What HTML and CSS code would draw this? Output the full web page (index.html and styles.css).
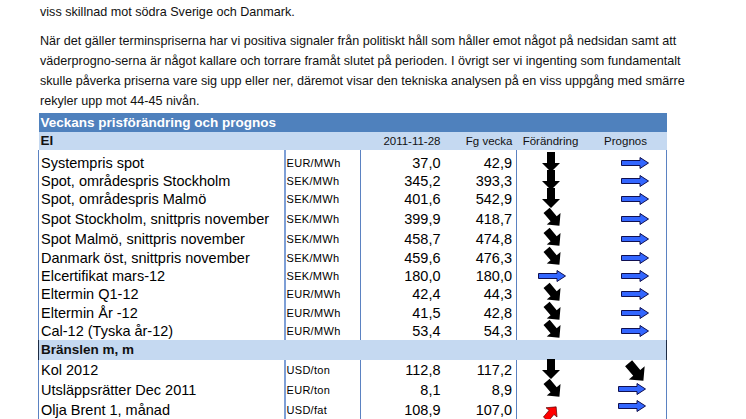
FILE: index.html
```html
<!DOCTYPE html>
<html lang="sv">
<head>
<meta charset="utf-8">
<link rel="stylesheet" href="styles.css">
</head>
<body>
<div class="text">
  <p class="p1">viss skillnad mot södra Sverige och Danmark.</p>
  <p class="p2">När det gäller terminspriserna har vi positiva signaler från politiskt håll som håller emot något på nedsidan samt att<br>väderprogno-serna är något kallare och torrare framåt slutet på perioden. I övrigt ser vi ingenting som fundamentalt<br>skulle påverka priserna vare sig upp eller ner, däremot visar den tekniska analysen på en viss uppgång med smärre<br>rekyler upp mot 44-45 nivån.</p>
</div>

<svg width="0" height="0" class="defs">
  <defs>
    <path id="down" d="M5 0 H13 V11 H18 L9 20 L0 11 H5 Z"/>
    <path id="right" d="M0.5 3.5 H19 V0.5 L27.5 6 L19 11.5 V8.5 H0.5 Z"/>
  </defs>
</svg>

<table class="prices">
  <colgroup>
    <col class="c-name"><col class="c-unit"><col class="c-num"><col class="c-num2"><col class="c-chg"><col class="c-prog">
  </colgroup>
  <tr class="title"><td colspan="6">Veckans prisförändring och prognos</td></tr>
  <tr class="sub">
    <td class="name">El</td><td></td><td class="num">2011-11-28</td><td class="num">Fg vecka</td><td class="ctr">Förändring</td><td class="ctr prg">Prognos</td>
  </tr>
  <tr class="r h22">
    <td class="name">Systempris spot</td><td class="unit">EUR/MWh</td><td class="num">37,0</td><td class="num sep">42,9</td>
    <td class="arr"><svg class="a-down" width="18" height="20"><use href="#down"/></svg></td>
    <td class="arr edge"><svg class="a-right" width="28" height="12"><use href="#right"/></svg></td>
  </tr>
  <tr class="r h18">
    <td class="name">Spot, områdespris Stockholm</td><td class="unit">SEK/MWh</td><td class="num">345,2</td><td class="num sep">393,3</td>
    <td class="arr"><svg class="a-down" width="18" height="20"><use href="#down"/></svg></td>
    <td class="arr edge"><svg class="a-right" width="28" height="12"><use href="#right"/></svg></td>
  </tr>
  <tr class="r h18">
    <td class="name">Spot, områdespris Malmö</td><td class="unit">SEK/MWh</td><td class="num">401,6</td><td class="num sep">542,9</td>
    <td class="arr"><svg class="a-down" width="18" height="20"><use href="#down"/></svg></td>
    <td class="arr edge"><svg class="a-right" width="28" height="12"><use href="#right"/></svg></td>
  </tr>
  <tr class="r h20">
    <td class="name">Spot Stockholm, snittpris november</td><td class="unit">SEK/MWh</td><td class="num">399,9</td><td class="num sep">418,7</td>
    <td class="arr"><svg class="a-diag" width="18" height="20"><use href="#down"/></svg></td>
    <td class="arr edge"><svg class="a-right" width="28" height="12"><use href="#right"/></svg></td>
  </tr>
  <tr class="r h20">
    <td class="name">Spot Malmö, snittpris november</td><td class="unit">SEK/MWh</td><td class="num">458,7</td><td class="num sep">474,8</td>
    <td class="arr"><svg class="a-diag" width="18" height="20"><use href="#down"/></svg></td>
    <td class="arr edge"><svg class="a-right" width="28" height="12"><use href="#right"/></svg></td>
  </tr>
  <tr class="r h19">
    <td class="name">Danmark öst, snittpris november</td><td class="unit">SEK/MWh</td><td class="num">459,6</td><td class="num sep">476,3</td>
    <td class="arr"><svg class="a-diag" width="18" height="20"><use href="#down"/></svg></td>
    <td class="arr edge"><svg class="a-right" width="28" height="12"><use href="#right"/></svg></td>
  </tr>
  <tr class="r h18">
    <td class="name">Elcertifikat mars-12</td><td class="unit">SEK/MWh</td><td class="num">180,0</td><td class="num sep">180,0</td>
    <td class="arr"><svg class="a-right a-chg" width="28" height="12"><use href="#right"/></svg></td>
    <td class="arr edge"><svg class="a-right" width="28" height="12"><use href="#right"/></svg></td>
  </tr>
  <tr class="r h18">
    <td class="name">Eltermin Q1-12</td><td class="unit">EUR/MWh</td><td class="num">42,4</td><td class="num sep">44,3</td>
    <td class="arr"><svg class="a-diag" width="18" height="20"><use href="#down"/></svg></td>
    <td class="arr edge"><svg class="a-right" width="28" height="12"><use href="#right"/></svg></td>
  </tr>
  <tr class="r h19">
    <td class="name">Eltermin År -12</td><td class="unit">EUR/MWh</td><td class="num">41,5</td><td class="num sep">42,8</td>
    <td class="arr"><svg class="a-diag" width="18" height="20"><use href="#down"/></svg></td>
    <td class="arr edge"><svg class="a-right" width="28" height="12"><use href="#right"/></svg></td>
  </tr>
  <tr class="r h18">
    <td class="name">Cal-12 (Tyska år-12)</td><td class="unit">EUR/MWh</td><td class="num">53,4</td><td class="num sep">54,3</td>
    <td class="arr"><svg class="a-diag" width="18" height="20"><use href="#down"/></svg></td>
    <td class="arr edge"><svg class="a-right" width="28" height="12"><use href="#right"/></svg></td>
  </tr>
  <tr class="sub sec">
    <td class="name" colspan="6">Bränslen m, m</td>
  </tr>
  <tr class="r h19">
    <td class="name">Kol 2012</td><td class="unit">USD/ton</td><td class="num">112,8</td><td class="num sep">117,2</td>
    <td class="arr"><svg class="a-down" width="18" height="20"><use href="#down"/></svg></td>
    <td class="arr edge"><svg class="a-diag a-prog" width="18" height="20"><use href="#down"/></svg></td>
  </tr>
  <tr class="r h20">
    <td class="name">Utsläppsrätter Dec 2011</td><td class="unit">EUR/ton</td><td class="num">8,1</td><td class="num sep">8,9</td>
    <td class="arr"><svg class="a-diag" width="18" height="20"><use href="#down"/></svg></td>
    <td class="arr edge"><svg class="a-right a-up" width="28" height="12"><use href="#right"/></svg></td>
  </tr>
  <tr class="r h20">
    <td class="name">Olja Brent 1, månad</td><td class="unit">USD/fat</td><td class="num">108,9</td><td class="num sep">107,0</td>
    <td class="arr"><svg class="a-red" width="18" height="20"><use href="#down"/></svg></td>
    <td class="arr edge"><svg class="a-right a-up2" width="28" height="12"><use href="#right"/></svg></td>
  </tr>
</table>
</body>
</html>
```

FILE: styles.css
```css
html, body {
  margin: 0;
  padding: 0;
  background: #ffffff;
}

.defs {
  position: absolute;
  width: 0;
  height: 0;
}

.text {
  padding: 2px 0 0 40px;
  font-family: "Liberation Sans", Arial, sans-serif;
  font-size: 12.6px;
  line-height: 20px;
  color: #111;
}

.text p {
  margin: 0;
  white-space: nowrap;
}

.p1 {
  margin-bottom: 9px !important;
}

.prices {
  margin: 2px 0 0 38px;
  border-collapse: collapse;
  table-layout: fixed;
  width: 628px;
  font-family: "Liberation Sans", Arial, sans-serif;
  color: #000;
}

.c-name { width: 246px; }
.c-unit { width: 76px; }
.c-num { width: 84px; }
.c-num2 { width: 72px; }
.c-chg { width: 74px; }
.c-prog { width: 76px; }

.prices td {
  padding: 0;
  white-space: nowrap;
  overflow: visible;
}

.title td {
  height: 19px;
  background: #4f81bd;
  color: #ffffff;
  font-weight: bold;
  font-size: 13.5px;
  padding-left: 2px;
  line-height: 19px;
}

.sub td {
  height: 18px;
  background: #c5d9f1;
  font-size: 11.5px;
  line-height: 18px;
  color: #111;
}

.sub td.name {
  font-weight: bold;
  font-size: 13.5px;
  padding-left: 2px;
}

.sub td.num {
  text-align: right;
  padding-right: 4px;
}

.sub td.ctr {
  text-align: center;
  padding-right: 6px;
}

.sub td.prg {
  padding-left: 0;
}

.sec td {
  height: 20px;
  border-left: 1px solid #1c2b44;
  border-right: 1px solid #1c2b44;
}

.r td {
  vertical-align: bottom;
  font-size: 14.5px;
  line-height: 18px;
}

.h22 td { height: 22px; }
.h18 td { height: 18px; }
.h19 td { height: 19px; }
.h20 td { height: 20px; }

.r td.name {
  padding-left: 2px;
  border-left: 1px solid #5b82c2;
  border-right: 2px solid #7e9fd6;
}

.r td.unit {
  font-size: 11px;
  padding-left: 1px;
  letter-spacing: 0.3px;
  border-right: 1px solid #5b82c2;
}

.r td.num {
  text-align: right;
  padding-right: 4px;
}

.r td.sep {
  border-right: 1px solid #5b82c2;
}

.r td.edge {
  border-right: 1px solid #5b82c2;
}

.arr {
  position: relative;
}

.arr svg {
  position: absolute;
  overflow: visible;
}

.a-down {
  left: 25px;
  bottom: 0;
  fill: #000;
}

.a-diag {
  left: 27px;
  bottom: 0;
  fill: #000;
  transform: rotate(-40deg);
}

.a-right {
  left: 30px;
  bottom: 3px;
  fill: #3366ff;
  stroke: #101050;
  stroke-width: 1;
}

.a-chg {
  left: 21px;
}

.a-prog {
  left: 36px;
  bottom: -3px;
  transform: rotate(-40deg) scale(1.15);
}

.a-up {
  left: 27px;
  bottom: 4px;
}

.a-up2 {
  left: 27px;
  bottom: 7px;
}

.a-red {
  left: 25px;
  bottom: -4px;
  fill: #ff0000;
  stroke: #550000;
  stroke-width: 0.8;
  transform: rotate(-140deg) scale(0.8);
}
```
